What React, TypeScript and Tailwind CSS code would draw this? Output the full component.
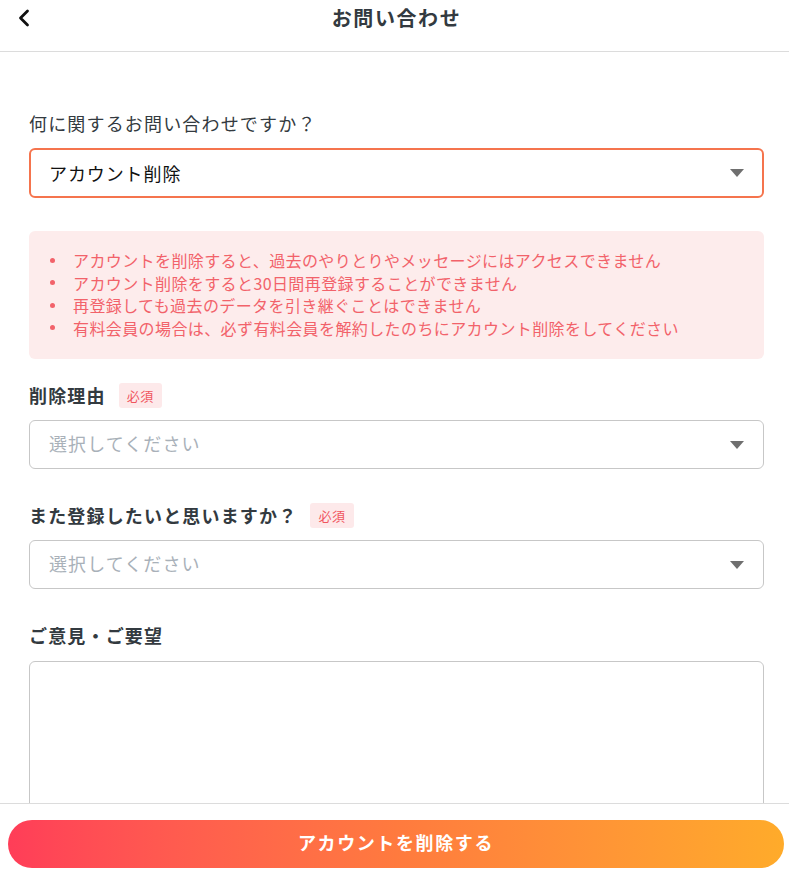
import { ChevronLeft } from "lucide-react";

const FONT = { fontFamily: '"Noto Sans CJK JP", "Noto Sans", sans-serif' };

const NOTES = [
  "アカウントを削除すると、過去のやりとりやメッセージにはアクセスできません",
  "アカウント削除をすると30日間再登録することができません",
  "再登録しても過去のデータを引き継ぐことはできません",
  "有料会員の場合は、必ず有料会員を解約したのちにアカウント削除をしてください",
];

function Caret() {
  return (
    <svg width="14" height="8" viewBox="0 0 14 8" className="shrink-0">
      <path d="M0 0 H14 L7 8 Z" fill="#6f6f6f" />
    </svg>
  );
}

function Select({ value, placeholder, active }: { value?: string; placeholder?: string; active?: boolean }) {
  return (
    <div
      className={
        active
          ? "h-[50px] rounded-[6px] border-2 border-[#f5744d] flex items-center justify-between pl-[18px] pr-[18px]"
          : "h-[49px] rounded-[6px] border border-[#c7c7c7] flex items-center justify-between pl-[19px] pr-[19px]"
      }
    >
      {value ? (
        <span className="text-[18px] text-[#111] tracking-[0.05em]">{value}</span>
      ) : (
        <span className="text-[18px] text-[#a9b1b9] tracking-[0.06em] -mt-[2px]">{placeholder}</span>
      )}
      <Caret />
    </div>
  );
}

function Label({ text, required }: { text: string; required?: boolean }) {
  return (
    <div className="flex items-center gap-[13px] h-[25px]">
      <span className="text-[18px] font-bold text-[#333a40] leading-[25px] tracking-[0.065em]">{text}</span>
      {required && (
        <span className="h-[25px] px-[8px] rounded-[3px] bg-[#fde9ea] text-[#f0555e] text-[13px] tracking-[0.05em] flex items-center">必須</span>
      )}
    </div>
  );
}

export default function App() {
  return (
    <div className="h-[879px] flex flex-col bg-white overflow-hidden" style={FONT}>
      {/* Header */}
      <div className="h-[52px] shrink-0 relative flex items-center justify-center border-b border-[#dcdcdc] pl-[4px]">
        <ChevronLeft size={28} strokeWidth={2.4} color="#111" className="absolute left-[10px] top-[4px]" />
        <span className="text-[20px] font-bold text-[#333a40] tracking-[0.08em] -mt-[16px]">お問い合わせ</span>
      </div>

      {/* Form */}
      <div className="flex-1 overflow-hidden pl-[29px] pr-[25px] pt-[59px]">
        <div className="text-[18px] text-[#333a40] leading-[25px] tracking-[0.065em]">何に関するお問い合わせですか？</div>
        <div className="mt-[12px]">
          <Select value="アカウント削除" active />
        </div>

        <div className="mt-[33px] rounded-[6px] bg-[#fdecec] pt-[18px] pb-[20px] pl-[20px] pr-[10px]">
          <ul className="flex flex-col">
            {NOTES.map(n => (
              <li key={n} className="flex items-center text-[16px] leading-[22.5px] tracking-[0.025em] text-[#f2626a]">
                <span className="w-[5px] h-[5px] rounded-full bg-[#f2626a] shrink-0 mr-[18px] ml-[1px]" />
                {n}
              </li>
            ))}
          </ul>
        </div>

        <div className="mt-[24px]">
          <Label text="削除理由" required />
        </div>
        <div className="mt-[12px]">
          <Select placeholder="選択してください" />
        </div>

        <div className="mt-[34px]">
          <Label text="また登録したいと思いますか？" required />
        </div>
        <div className="mt-[12px]">
          <Select placeholder="選択してください" />
        </div>

        <div className="mt-[34px]">
          <Label text="ご意見・ご要望" />
        </div>
        <div className="mt-[13px] h-[200px] rounded-[6px] border border-[#c7c7c7]" />
      </div>

      {/* Footer */}
      <div className="h-[76px] shrink-0 border-t border-[#dcdcdc] bg-white pt-[16px] pl-[8px] pr-[5px]">
        <button className="w-full h-[48px] rounded-full bg-gradient-to-r from-[#ff3d58] via-[#ff7a3e] to-[#ffab2a] text-white text-[18px] font-bold tracking-[0.09em] pb-[3px]">
          アカウントを削除する
        </button>
      </div>
    </div>
  );
}
